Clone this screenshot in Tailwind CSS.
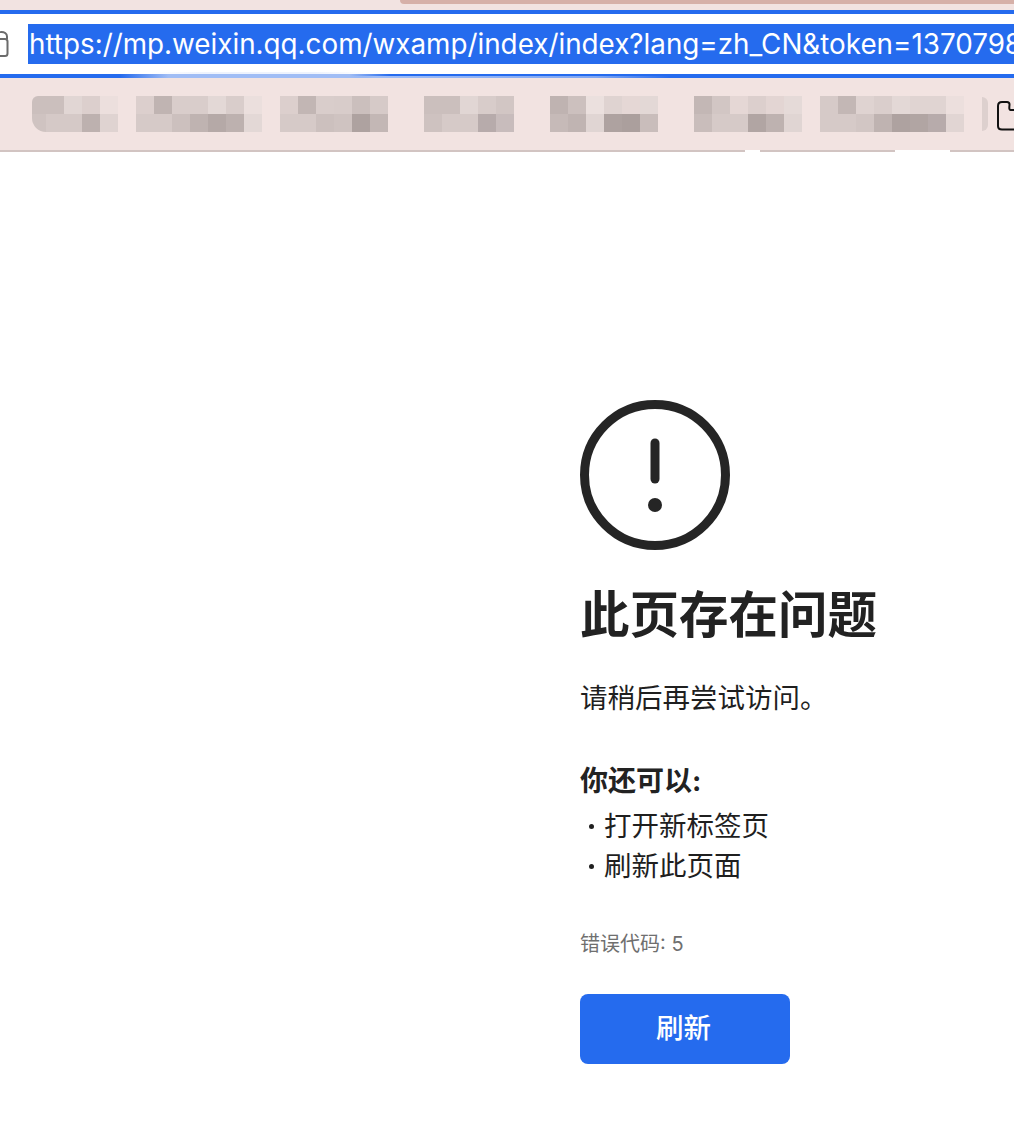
<!DOCTYPE html>
<html lang="zh-CN">
<head>
    <meta charset="UTF-8">
    <title>此页存在问题</title>
    <script src="https://cdn.jsdelivr.net/npm/@tailwindcss/browser@4"></script>
</head>
<body class="bg-white overflow-hidden font-['Inter','Noto_Sans_CJK_SC',sans-serif] text-[#222222]">
    <!-- Browser chrome -->
    <header class="relative w-full overflow-hidden">
        <div class="h-[10px] bg-[#f2e3e1] flex justify-end">
            <div class="w-[614px] h-[4px] bg-[#d6b0a8] rounded-bl-[10px]"></div>
        </div>

        <!-- Address bar -->
        <div class="h-[68px] bg-white border-y-4 border-[#256bee] py-[10px] flex items-center overflow-hidden">
            <svg class="w-[9px] h-[26px] shrink-0" viewBox="0 0 9 26" fill="none" stroke="#6b6b6b" stroke-width="2">
                <path d="M-4 9V5.500C-4 2.500 -1 1 1.500 1S7 2.500 7 5.500V8"/>
                <rect x="-8" y="8" width="15.500" height="17" rx="2.500"/>
            </svg>
            <div class="ml-[19px] h-[40px] bg-[#256bee] text-white text-[27.800px] leading-[40px] whitespace-nowrap pl-[1px] w-[987px] shrink-0 overflow-hidden">https://mp.weixin.qq.com/wxamp/index/index?lang=zh_CN&amp;token=1370798</div>
        </div>

        <!-- Bookmarks, pixelated -->
        <div class="h-[74px] bg-[#f2e3e1] border-b-2 border-[#d2c4c2] pt-[18px] flex items-start overflow-hidden">
            <div id="mosaic" class="flex items-start ml-[32px]"></div>
            <div class="ml-[18px] w-[6px] h-[34px] mt-[1px] bg-[#ddd0ce] rounded-r-full shrink-0"></div>
            <svg class="ml-[9px] mt-[5px] w-[20px] h-[30px] shrink-0" viewBox="0 0 20 30" fill="none" stroke="#111111" stroke-width="2">
                <path d="M22 9H13.500C12.500 9 12 8 12.500 4C12.700 2 11.500 1 10 1H5C2.500 1 1 2.500 1 5V25C1 27.500 2.500 28.500 5 28.500H22"/>
            </svg>
        </div>

        <!-- Glare over the bars -->
        <div class="absolute left-[300px] top-[76px] w-[370px] h-[2px] bg-[linear-gradient(90deg,transparent,#a0bdf5_20%,#7fa6f2_80%,transparent)]"></div>
        <div class="absolute left-[120px] top-[74px] w-[270px] h-[4px] bg-[linear-gradient(90deg,transparent,#a0bdf5_18%,#a0bdf5_85%,transparent)]"></div>
        <div class="absolute left-[150px] top-[72px] w-[220px] h-[2px] bg-[linear-gradient(90deg,transparent,#eef3fd_25%,#eef3fd_75%,transparent)]"></div>
        <div class="absolute left-[745px] top-[150px] w-[15px] h-[2px] bg-white"></div>
        <div class="absolute left-[895px] top-[150px] w-[55px] h-[2px] bg-white"></div>
    </header>

    <!-- Error page -->
    <main class="pl-[580px] pt-[248px]">
        <svg class="w-[150px] h-[150px]" viewBox="0 0 150 150" fill="none">
            <circle cx="75" cy="75" r="70.500" stroke="#252525" stroke-width="9"/>
            <path d="M75 43V79" stroke="#252525" stroke-width="9" stroke-linecap="round"/>
            <circle cx="75" cy="105" r="7" fill="#252525"/>
        </svg>

        <h1 class="mt-[34px] text-[49.500px] leading-[62px] font-bold">此页存在问题</h1>
        <p class="mt-[32px] text-[27.500px] leading-[40px] text-[#1f1f1f]">请稍后再尝试访问。</p>

        <h2 class="mt-[43px] text-[28px] leading-[40px] font-bold">你还可以:</h2>
        <ul class="mt-[5px] text-[27.500px] leading-[40px] text-[#1f1f1f]">
            <li class="flex items-center"><span class="w-[5px] h-[5px] ml-[9px] mr-[10px] rounded-full bg-[#1f1f1f]"></span>打开新标签页</li>
            <li class="flex items-center"><span class="w-[5px] h-[5px] ml-[9px] mr-[10px] rounded-full bg-[#1f1f1f]"></span>刷新此页面</li>
        </ul>

        <p class="mt-[43px] text-[20px] leading-[30px] text-[#6f6f6f]">错误代码: 5</p>

        <button class="mt-[35px] block w-[210px] h-[70px] rounded-[8px] bg-[#256bee] text-white text-[27.500px] font-medium pr-[3px]">刷新</button>
    </main>

    <script>
        // each group: [gap before, first cell width, top row, bottom row]
        const groups = [
            [0, 14, ['#cbbfbd','#cbbfbd','#e1d6d4','#dccfcd','#ecdfdd'], ['#cfc3c1','#d5c9c7','#d5c9c7','#bdb1af','#dfd3d1']],
            [18, 18, ['#dccfcd','#c0b4b2','#d9cdcb','#d9cdcb','#e3d8d6','#d9cdcb','#ebdfdd'], ['#d6cac8','#d6cac8','#ccc0be','#bfb3b1','#b5a9a7','#bdb1af','#e3d8d6']],
            [18, 18, ['#dccfcd','#c2b6b4','#d9cdcb','#d8ccca','#cbbfbd','#d6cac8'], ['#d6cac8','#d6cac8','#ccc0be','#cfc3c1','#aea2a0','#c3b7b5']],
            [36, 18, ['#cbbfbd','#cbbfbd','#e1d6d4','#d8ccca','#d2c6c4'], ['#cec2c0','#d6cac8','#d6cac8','#b7abab','#c8bcbc']],
            [36, 18, ['#bfb3b1','#ccc0be','#ebe0de','#dfd3d1','#e5d7d5','#e3d8d6'], ['#c6bab8','#c0b4b2','#e0d5d3','#aea2a0','#ab9f9d','#c9bdbb']],
            [36, 18, ['#c3b7b5','#d2c6c4','#e5d7d5','#dccfcd','#e3d5d3','#e5dad8'], ['#c9bdbb','#d6cac8','#d6cac8','#b1a5a3','#beb2b0','#e0d5d3']],
            [18, 18, ['#d6cac8','#c3b7b5','#dfd3d1','#dacecc','#e3d8d6','#e0d4d2','#e0d4d2','#ecdfdd'], ['#d6cac8','#d6cac8','#d2c6c4','#bfb3b1','#aea2a0','#b1a5a3','#b7abab','#e1d5d3']]
        ];

        const mosaic = document.getElementById('mosaic');
        groups.forEach(([gap, first, top, bottom], g) => {
            const group = document.createElement('div');
            group.className = g === 0 ? 'grid shrink-0 rounded-tl-[6px] rounded-bl-[14px] overflow-hidden' : 'grid shrink-0';
            group.style.marginLeft = gap + 'px';
            group.style.gridTemplateColumns = first + 'px repeat(' + (top.length - 1) + ', 18px)';
            group.style.gridAutoRows = '18px';
            top.concat(bottom).forEach(color => {
                const cell = document.createElement('div');
                cell.style.background = color;
                group.appendChild(cell);
            });
            mosaic.appendChild(group);
        });
    </script>
</body>
</html>
